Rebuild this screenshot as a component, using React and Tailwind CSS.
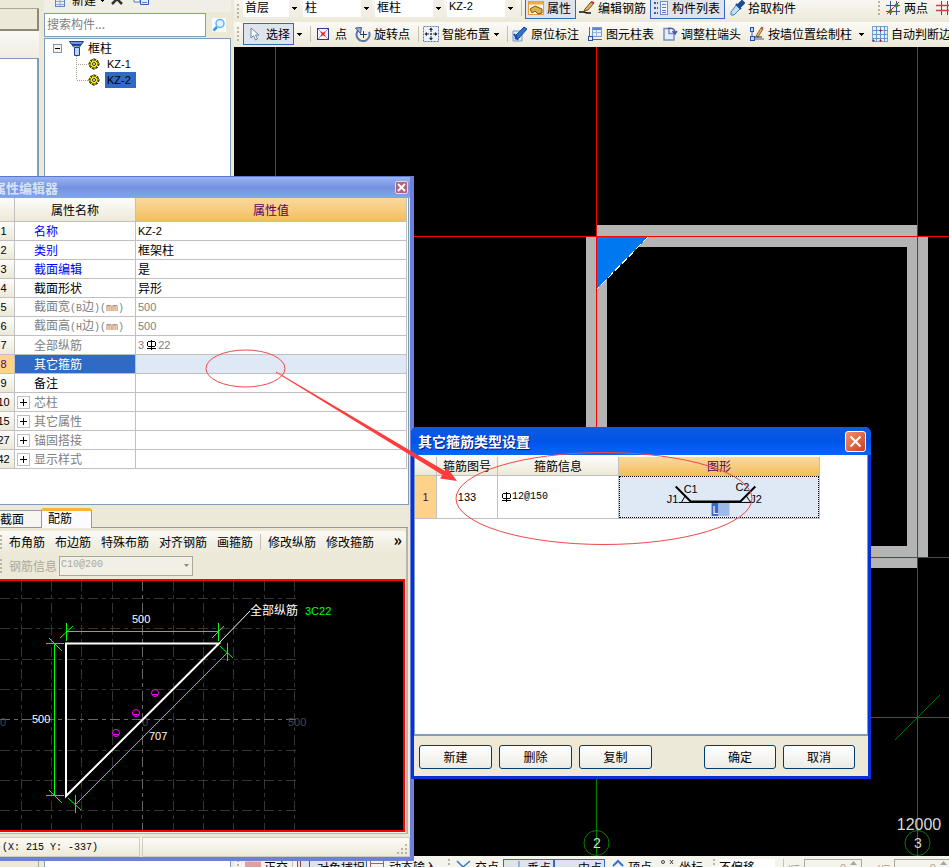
import React from "react";

const MONO = "font-['Liberation_Mono','Noto_Sans_CJK_SC',monospace] text-[10px]";
const NUM = "font-['Liberation_Sans','Noto_Sans_CJK_SC',sans-serif] text-[11px]";

function Grip() {
  return (
    <span className="mx-[3px] flex w-[3px] shrink-0 flex-col gap-[2px] self-center">
      {[0, 1, 2, 3].map((i) => (
        <i key={i} className="h-[2px] w-[2px] bg-[#b9b5a3]" />
      ))}
    </span>
  );
}

function Sep() {
  return <span className="h-4 w-px shrink-0 self-center bg-[#c5c2b4]" />;
}

function Caret() {
  return (
    <svg className="h-[3px] w-[5px] shrink-0" viewBox="0 0 5 3" shapeRendering="crispEdges">
      <path d="M0 0h5L2.500 3z" fill="#000" />
    </svg>
  );
}

const icons = {
  cursor: <path d="M5 2v10l2.500-2.500 2 4.500 2-1-2-4h3.500z" fill="#f8fbff" stroke="#6c87a8" />,
  point: (
    <>
      <rect x="1.500" y="2.500" width="11" height="11" fill="#f5f5ff" stroke="#2c3c8c" />
      <path d="M2 3l10 10M12 3L2 13" stroke="#8a9bd0" />
      <path d="M5 6l4 4M9 6l-4 4" stroke="#e02020" strokeWidth="1.500" />
    </>
  ),
  rotate: (
    <>
      <path d="M4 3.500A6.500 6.500 0 1 0 14 6" fill="none" stroke="#5a78a8" strokeWidth="2" />
      <path d="M.5 2l6-.5-1 6z" fill="#9db8dc" stroke="#36558c" />
      <path d="M8.500 5v7M5 8.500h7" stroke="#1c3c74" />
    </>
  ),
  smart: (
    <>
      <rect x=".5" y=".5" width="15" height="15" fill="#eef3fb" stroke="#5c789c" strokeDasharray="2 1" />
      <path d="M8 3v3M8 10v3M3 8h3M10 8h3" stroke="#18243c" />
      <path d="M8 1.500l2 2.500H6zM8 14.500l2-2.500H6zM1.500 8L4 6v4zM14.500 8L12 6v4z" fill="#18243c" />
      <circle cx="8" cy="8" r="1" fill="#18243c" />
    </>
  ),
  note: (
    <>
      <path d="M1 5h9v10H1z" fill="#dce9fa" stroke="#6d9ad8" />
      <path d="M4 9l8-8 3 2-8 9-4 1z" fill="#2f72c8" stroke="#174c98" />
      <path d="M2 8l4 6" stroke="#174c98" strokeWidth="2" />
    </>
  ),
  table: (
    <>
      <rect x="5.500" y="1.500" width="9" height="9" fill="#e7effb" stroke="#7a9ad0" />
      <path d="M6 3h8" stroke="#5b84cc" strokeWidth="2" />
      <path d="M6 6.500h8M9.500 4v6" stroke="#9cb6df" />
      <path d="M2.500 1v11M3 13.500h12" stroke="#4d6aa8" />
      <rect x="1.500" y="10.500" width="4" height="4" fill="#e3eeff" stroke="#274fae" />
    </>
  ),
  adjust: (
    <>
      <path d="M2 2.500h5v5h5v6.500H2z" fill="#e4edfb" stroke="#7791c4" strokeWidth="1.500" />
      <path d="M6 2.500c4-.5 7 0 7 4M10.500 5l2.500 3 2-3" fill="none" stroke="#4d55ac" strokeWidth="1.500" />
    </>
  ),
  wall: (
    <>
      <path d="M3 2v11h12" fill="none" stroke="#3d5fa8" />
      <rect x="1.500" y="1.500" width="3" height="4" fill="#bcd8ff" stroke="#274fae" />
      <rect x="1.500" y="10.500" width="4" height="4" fill="#bcd8ff" stroke="#274fae" />
      <path d="M7 10l5-8 2 1-5 8z" fill="#e4b668" stroke="#93662d" />
      <path d="M6 11h7" stroke="#222" />
      <path d="M12 1.500l2 1" stroke="#d04545" strokeWidth="2" />
    </>
  ),
  auto: (
    <>
      <rect x=".5" y=".5" width="15" height="15" fill="#e6f2ff" stroke="#78a5da" />
      <path d="M4.500 0v16M8.500 0v16M12.500 0v16M0 4.500h16M0 8.500h16M0 12.500h16" stroke="#5f96d8" />
      <path d="M8 4h1v1H8zM1 14h1v1H1zM8 14h1v1H8z" fill="#d00000" stroke="#d00000" />
    </>
  ),
  prop: (
    <>
      <rect x=".5" y="1.500" width="15" height="13" fill="#fff8e8" stroke="#e89a3c" />
      <path d="M1 3h14" stroke="#f0a848" strokeWidth="3" />
      <path d="M2 9l5-3 7 3v4l-4 1-3-3-3 2z" fill="#d9b34c" stroke="#6b5a2c" />
    </>
  ),
  pencil: (
    <>
      <path d="M6 9l6-7 3 1-6 7-4 1z" fill="#e5b25c" stroke="#7b4f27" />
      <path d="M12 2l3 1" stroke="#c83030" strokeWidth="2" />
      <path d="M0 12h5l3 1h4" stroke="#111" fill="none" strokeWidth="1.500" />
    </>
  ),
  list: (
    <>
      <path d="M1 3h4M1 8h4M1 13h4" stroke="#365caa" strokeWidth="2" strokeDasharray="2 1" />
      <rect x="7.500" y="1.500" width="7" height="13" fill="#f4f8ff" stroke="#6a8fcb" />
      <path d="M9 4.500h4M9 7.500h4M9 10.500h4M9 12.500h4" stroke="#5f7fb4" />
    </>
  ),
  dropper: (
    <>
      <path d="M8 4l4 4-7 7-3 0 0-3z" fill="#bfe1fb" stroke="#3c82c4" />
      <path d="M7 4l5 5M9 5l4-4 2 2-4 4z" fill="#1c4a94" stroke="#1c4a94" strokeWidth="2" />
    </>
  ),
  twoPoint: (
    <>
      <path d="M5.500 1v14M11.500 1v14M1 5.500h14M1 11.500h14" stroke="#3d4f98" />
      <path d="M2 14L14 2" stroke="#e02020" />
      <circle cx="5.500" cy="11.500" r="2" fill="#3c8c28" />
      <circle cx="11.500" cy="5.500" r="2" fill="#3c8c28" />
    </>
  ),
  parallel: (
    <>
      <path d="M5.500 1v14M11.500 1v14" stroke="#3d4f98" />
      <path d="M0 5.500h16M0 10.500h16" stroke="#c84050" strokeWidth="1.500" />
    </>
  ),
  sheet: (
    <>
      <rect x="2.500" y="1.500" width="9" height="13" fill="#e6effb" stroke="#5d84bf" />
      <path d="M3 9.500h8M3 12.500h8M7 7v7" stroke="#89a9d8" />
    </>
  ),
  del: <path d="M3 2l10 10M13 2L3 12" fill="none" stroke="#303030" strokeWidth="2.500" />,
  copy: (
    <>
      <path d="M1 5h6v5H1z" fill="#fff" stroke="#4774c4" />
      <path d="M7.500 2.500h8v10h-8z" fill="#e0ebfc" stroke="#2f5cb4" />
      <path d="M9 7.500h5M9 10.500h5" stroke="#5d84c4" />
    </>
  ),
  redBar: <path d="M5 0v5M0 3h16v6H0z" fill="#dfa0a0" stroke="#dfa0a0" />,
  snap: <path d="M2.500 0v9M11.500 0v9" stroke="#8a4444" fill="none" />,
  dyn: <path d="M0 4.500h14M.5 0v8M13.500 0v8" stroke="#a86060" fill="none" />,
  cross: <path d="M1 2l6 6 7-6" stroke="#3474d4" fill="none" strokeWidth="1.500" />,
  perp: <path d="M11 1v9" stroke="#8fb1e6" strokeWidth="2" />,
  none: null,
  apex: <path d="M4 7l5-5 5 5" stroke="#3474d4" fill="none" strokeWidth="2" />,
  coord: (
    <>
      <circle cx="3" cy="3" r="1.500" fill="none" stroke="#444" />
      <path d="M10 1l3 4M13 1l-3 4" stroke="#444" />
    </>
  ),
};

function Icon({ name }) {
  return (
    <svg className="h-4 w-4 shrink-0" viewBox="0 0 16 16">
      {icons[name]}
    </svg>
  );
}

function Tool({ icon, children, label, className = "" }) {
  return (
    <button type="button" aria-label={label} className={`flex shrink-0 items-center gap-[3px] whitespace-nowrap leading-4 ${className}`}>
      <Icon name={icon} />
      {children}
    </button>
  );
}

const ACTIVE = "border border-[#316ac5] bg-[#dfe4ec]";

function Combo({ label, value, width, latin }) {
  return (
    <span className={`relative mr-[3px] flex h-[17px] shrink-0 bg-white ${width}`}>
      <select aria-label={label} className={`h-full w-full appearance-none bg-white pb-1 pl-0.5 leading-[13px] outline-none ${latin ? NUM : ""}`}>
        <option>{value}</option>
      </select>
      <span className="pointer-events-none absolute inset-y-0 right-0 flex w-[11px] items-center justify-center bg-[#f1efe5]">
        <Caret />
      </span>
    </span>
  );
}

function TopBars() {
  return (
    <>
      <div className="flex h-[22px] shrink-0 items-start overflow-hidden bg-linear-to-b from-[#f8f7f2] to-[#ece9d8]">
        <Grip />
        <Combo label="楼层" value="首层" width="w-[57px]" />
        <Combo label="构件大类" value="柱" width="w-[69px]" />
        <Combo label="构件类型" value="框柱" width="w-[69px]" />
        <Combo label="构件" value="KZ-2" width="w-[69px]" latin />
        <span className="ml-0.5 flex h-4"><Sep /></span>
        <Tool icon="prop" className={`ml-[3px] h-[19px] w-[51px] border-t-0 px-[2px] pb-0.5 ${ACTIVE}`}>属性</Tool>
        <Tool icon="pencil" className="ml-[3px] h-4">编辑钢筋</Tool>
        <Tool icon="list" className={`ml-1 h-[19px] w-[75px] border-t-0 px-[2px] pb-0.5 ${ACTIVE}`}>构件列表</Tool>
        <Tool icon="dropper" className="ml-1 h-4">拾取构件</Tool>
        <span className="ml-[79px] flex h-4"><Grip /></span>
        <Tool icon="twoPoint" className="ml-px h-4">两点</Tool>
        <Tool icon="parallel" label="平行" className="ml-2 h-4" />
      </div>
      <div className="flex h-[25px] shrink-0 items-center overflow-hidden bg-linear-to-b from-[#fbfaf6] to-[#ece9d8] pb-px">
        <Grip />
        <Tool icon="cursor" className={`mr-[3px] h-[22px] w-[51px] px-0.5 ${ACTIVE}`}>
          <span className="ml-px">选择</span>
        </Tool>
        <Caret />
        <span className="ml-2 mr-[5px] flex"><Sep /></span>
        <Tool icon="point">点</Tool>
        <Tool icon="rotate" className="ml-2">旋转点</Tool>
        <span className="ml-2 mr-1 flex"><Sep /></span>
        <Tool icon="smart" className="mr-1">智能布置</Tool>
        <Caret />
        <span className="ml-2 mr-1 flex"><Sep /></span>
        <Tool icon="note">原位标注</Tool>
        <Tool icon="table" className="ml-2">图元柱表</Tool>
        <Tool icon="adjust" className="ml-2">调整柱端头</Tool>
        <Tool icon="wall" className="ml-2 mr-[7px]">按墙位置绘制柱</Tool>
        <Caret />
        <Tool icon="auto" className="ml-2">自动判断边角柱</Tool>
      </div>
    </>
  );
}

function Plan() {
  return (
    <div className="min-h-0 flex-1 overflow-hidden bg-black">
      <svg className="h-full w-full" role="img" aria-label="平面图">
        <g transform="translate(-234 -47)" shapeRendering="crispEdges">
          <g fill="#b4b4b4">
            <rect x="597" y="225" width="320" height="22" />
            <rect x="586" y="237" width="21" height="320" />
            <rect x="907" y="237" width="21" height="320" />
            <rect x="597" y="546" width="320" height="22" />
          </g>
          <path d="M597 237h51l-51 52z" fill="#0078f0" />
          <path d="M648 237l-51 52" stroke="#fff" strokeDasharray="7 3" />
          <path d="M275.500 47v810M596.500 47v510M917.500 47v510M234 236.500h4000M234 557.500h4000" stroke="#ff0000" />
          <path d="M596.500 558v299M917.500 558v299M234 717.500h4000M895 740l45-45" stroke="#008000" fill="none" />
          <g fill="none" stroke="#008000" shapeRendering="auto">
            <circle cx="596.500" cy="843" r="12.500" />
            <circle cx="917.500" cy="843" r="12.500" />
          </g>
        </g>
        <g transform="translate(-234 -47)" fill="#d8d8d8" className="font-['Liberation_Sans',sans-serif]" textAnchor="middle">
          <text x="597" y="848" fontSize="14">2</text>
          <text x="918" y="848" fontSize="14">3</text>
          <text x="919" y="830" fontSize="16">12000</text>
        </g>
      </svg>
    </div>
  );
}

function Spin({ label }) {
  return (
    <span className="flex h-4 w-[58px] shrink-0 items-start border border-[#aca899] text-[#aca899]">
      <input aria-label={label} defaultValue="0" className={`min-w-0 flex-1 bg-transparent pr-1 text-right leading-4 ${NUM}`} />
      <svg className="mt-px mr-1 h-[5px] w-[7px]" viewBox="0 0 7 5"><path d="M0 4l3.500-4L7 4z" fill="#aca899" /></svg>
    </span>
  );
}

function BottomBar() {
  return (
    <div className="flex h-[11px] shrink-0 items-start overflow-hidden bg-[#f5f4ec] pt-[3px]">
      <Grip />
      <Tool icon="redBar" className="ml-0.5">正交</Tool>
      <span className="ml-1 mr-1 flex"><Sep /></span>
      <Tool icon="snap" className={`w-[70px] ${ACTIVE}`}>对象捕捉</Tool>
      <Tool icon="dyn" className="ml-[3px]">动态输入</Tool>
      <span className="ml-2 flex"><Grip /></span>
      <Tool icon="cross" className="ml-0.5">交点</Tool>
      <Tool icon="perp" className={`ml-1 w-[51px] pl-1 ${ACTIVE}`}>垂点</Tool>
      <Tool icon="none" className={`w-[51px] pl-1 ${ACTIVE}`}>中点</Tool>
      <Tool icon="apex" className="ml-1">顶点</Tool>
      <Tool icon="coord" className="ml-2">坐标</Tool>
      <span className="ml-[7px] flex"><Grip /></span>
      <select aria-label="偏移方式" className="w-[56px] shrink-0 appearance-none bg-white leading-4">
        <option>不偏移</option>
      </select>
      <span className="ml-2 mr-1 flex"><Sep /></span>
      <span className={`mr-1 text-[#aca899] ${NUM}`}>x=</span>
      <Spin label="X 偏移" />
      <span className={`ml-4 mr-1 text-[#aca899] ${NUM}`}>y=</span>
      <Spin label="Y 偏移" />
    </div>
  );
}

function Gear() {
  return (
    <svg className="h-3 w-3 shrink-0" viewBox="0 0 12 12">
      <circle cx="6" cy="6" r="4.500" fill="#f4ee00" stroke="#3a3a00" strokeWidth="1.500" strokeDasharray="2 1.500" />
      <path d="M6 0v3M6 9v3M0 6h3M9 6h3M2 2l2 2M10 2L8 4M2 10l2-2M10 10L8 8" stroke="#4a4700" />
      <circle cx="6" cy="6" r="1.500" fill="#fff" stroke="#333" />
    </svg>
  );
}

function TreeLeaf({ name, selected }) {
  return (
    <li className="flex h-4 items-center">
      <svg className="h-4 w-3 shrink-0" viewBox="0 0 12 16" shapeRendering="crispEdges">
        <path d={selected ? "M.5 0v8H12" : "M.5 0v16M0 8.500h12"} fill="none" stroke="#a8a38e" strokeDasharray="1 1" />
      </svg>
      <Gear />
      <span className={`ml-[5px] h-4 px-0.5 leading-4 ${NUM} ${selected ? "w-[31px] bg-[#316ac5]" : ""}`}>{name}</span>
    </li>
  );
}

function LeftPanels() {
  return (
    <>
      <div className="flex w-[39px] shrink-0 flex-col">
        <div className="h-[9px] shrink-0 border-b border-[#aca899]" />
        <div className="h-[22px] shrink-0 border-b-2 border-r-2 border-[#8c8978] bg-[#ece9d8]" />
        <div className="h-[27px] shrink-0 bg-linear-to-b from-[#faf9f5] to-[#efede0]" />
        <div className="min-h-0 flex-1 border-t border-r-2 border-[#7f9db9] bg-white" />
        <div className="h-[6px] shrink-0 border-r border-[#aca899]" />
      </div>
      <div className="ml-[5px] flex w-[187px] shrink-0 flex-col">
        <div className="h-3 shrink-0 overflow-hidden bg-[#f1efe5]">
          <div className="-mt-2 flex h-4 items-center pl-[9px]">
            <Tool icon="sheet" className="mr-1">新建</Tool>
            <Caret />
            <Tool icon="del" label="删除" className="ml-1" />
            <Tool icon="copy" label="复制" className="ml-2" />
          </div>
        </div>
        <div className="flex h-[26px] shrink-0 items-center">
          <input aria-label="搜索构件" placeholder="搜索构件..." className="h-6 min-w-0 flex-1 border border-[#7f9db9] bg-white pb-1 pl-0.5 placeholder:text-[#808080]" />
          <button type="button" aria-label="搜索" className="flex w-[25px] justify-center">
            <svg className="h-[14px] w-[14px]" viewBox="0 0 14 14">
              <rect width="14" height="14" fill="#f5fbff" />
              <path d="M1.500 12.500L5 9" stroke="#3a94e6" strokeWidth="2.500" />
              <circle cx="8" cy="5.500" r="4" fill="#dff2ff" stroke="#5cb4f0" strokeWidth="1.500" />
            </svg>
          </button>
        </div>
        <div className="min-h-0 flex-1 border border-b-0 border-[#7f9db9] bg-white pt-px pl-2">
          <div className="flex h-4 items-center">
            <svg className="h-[9px] w-[9px]" viewBox="0 0 9 9" shapeRendering="crispEdges">
              <rect x=".5" y=".5" width="8" height="8" fill="#f5f3ea" stroke="#7b98b4" />
              <path d="M2 4.500h5" stroke="#000" />
            </svg>
            <svg className="ml-[7px] mr-1 h-[15px] w-[15px]" viewBox="0 0 15 15">
              <path d="M.5.500h14l-2 3h-10z" fill="#6f93dc" stroke="#1c3c8c" />
              <path d="M3 4.500h9L10 6H5z" fill="#fff" stroke="#2e519f" />
              <path d="M5.500 6.500h5v8h-5z" fill="#bcd6fa" stroke="#1c3ca4" />
            </svg>
            框柱
          </div>
          <ul className="pl-[23px]">
            <TreeLeaf name="KZ-1" />
            <TreeLeaf name="KZ-2" selected />
          </ul>
        </div>
      </div>
      <div className="w-[3px] shrink-0" />
    </>
  );
}

function Rebar() {
  return (
    <svg className="h-[10px] w-[10px] shrink-0 text-black" viewBox="0 0 10 10" shapeRendering="crispEdges">
      <path d="M5 0h1v10H5zM1 8h9v1H1zM2 1h7v1H2zM1 2h1v4H1zM9 2h1v4H9zM2 6h7v1H2z" fill="currentColor" />
    </svg>
  );
}

const M = ({ children }) => <span className={MONO}>{children}</span>;

const rows = [
  { no: "1", name: "名称", value: <span className={NUM}>KZ-2</span>, tone: "text-[#0000ff]" },
  { no: "2", name: "类别", value: "框架柱", tone: "text-[#0000ff]" },
  { no: "3", name: "截面编辑", value: "是", tone: "text-[#0000ff]" },
  { no: "4", name: "截面形状", value: "异形", tone: "text-black" },
  { no: "5", name: <>截面宽<M>(B</M>边<M>)(mm)</M></>, value: <span className={NUM}>500</span>, tone: "text-[#808080]", dim: true },
  { no: "6", name: <>截面高<M>(H</M>边<M>)(mm)</M></>, value: <span className={NUM}>500</span>, tone: "text-[#808080]", dim: true },
  { no: "7", name: "全部纵筋", value: <span className={`flex items-center gap-0.5 ${NUM}`}>3<Rebar />22</span>, tone: "text-[#808080]", dim: true },
  { no: "8", name: "其它箍筋", value: "", tone: "text-white", selected: true },
  { no: "9", name: "备注", value: "", tone: "text-black" },
  { no: "10", name: "芯柱", value: "", tone: "text-[#808080]", group: true },
  { no: "15", name: "其它属性", value: "", tone: "text-[#808080]", group: true },
  { no: "27", name: "锚固搭接", value: "", tone: "text-[#808080]", group: true },
  { no: "42", name: "显示样式", value: "", tone: "text-[#808080]", group: true },
];

const CELL = "border-b border-r border-[#c0c0c0] p-0";
const HEAD = "bg-linear-to-b from-[#fdfcf9] to-[#ece9d8] font-normal";
const HEAD_ON = "bg-linear-to-b from-[#fad99e] to-[#f3bf5c] font-normal text-[#5a0060]";

function PropertyTable() {
  return (
    <table className="w-[414px] table-fixed border-separate border-spacing-0">
      <colgroup>
        <col className="w-[22px]" />
        <col className="w-[121px]" />
        <col />
      </colgroup>
      <thead>
        <tr className="h-6">
          <th className={`${CELL} ${HEAD}`} aria-label="序号" />
          <th className={`${CELL} ${HEAD}`}>属性名称</th>
          <th className={`${CELL} ${HEAD_ON}`}>属性值</th>
        </tr>
      </thead>
      <tbody>
        {rows.map((r) => (
          <tr key={r.no} className="h-[19px]">
            <td className={`${CELL} text-center leading-4 ${NUM} ${r.selected ? "bg-[#ffd28c] text-[#5a0060]" : HEAD}`}>{r.no}</td>
            <td className={`${CELL} ${r.tone} ${r.selected ? "bg-[#316ac5]" : ""}`}>
              <div className="flex h-[18px] items-center pl-[2px]">
                <span className="flex w-[17px] shrink-0">
                  {r.group && (
                    <button type="button" aria-label="展开" className="h-[13px] w-[13px] border border-[#c0c0c0]">
                      <svg className="h-full w-full" viewBox="0 0 11 11" shapeRendering="crispEdges">
                        <path d="M2 5.500h7M5.500 2v7" stroke="#000" />
                      </svg>
                    </button>
                  )}
                </span>
                <span className="whitespace-nowrap leading-4">{r.name}</span>
              </div>
            </td>
            <td className={`${CELL} ${r.dim ? "text-[#808080]" : ""} ${r.selected ? "bg-[#dfe9f6]" : ""}`}>
              <div className="flex h-[18px] items-center pl-0.5">{r.value}</div>
            </td>
          </tr>
        ))}
      </tbody>
    </table>
  );
}

function Section() {
  return (
    <svg className="h-full w-full" role="img" aria-label="截面配筋图">
      <g transform="translate(5 -581)">
        <g stroke="#343434" strokeDasharray="10 4 4 4" shapeRendering="crispEdges">
          <path d="M21.500 581v250M51.500 581v250M81.500 581v250M112.500 581v250M173.500 581v250M203.500 581v250M233.500 581v250M264.500 581v250M294.500 581v250" />
          <path d="M0 598.500h299M0 628.500h299M0 659.500h299M0 689.500h299M0 750.500h299M0 780.500h299M0 810.500h299" />
          <path d="M142.500 581v250M0 719.500h299" stroke="#686868" />
        </g>
        <g fill="#484848" className="font-['Liberation_Sans',sans-serif]" fontSize="11">
          <text x="0" y="726">0</text>
          <text x="142" y="726">0</text>
          <text x="288" y="726">500</text>
        </g>
        <g stroke="#00ff00" fill="none">
          <path d="M66 631.500h153M54.500 643v153M46 643.500h18M46 795.500h18M66.500 623v18M218.500 623v18M227.500 643v18M75.500 795v18" shapeRendering="crispEdges" />
          <path d="M60 638l13-12M212 638l12-12M49 638l13 13M49 790l13 13M75 805L228 652M220 646l13 12M68 798l13 12" />
        </g>
        <path d="M66 643.500H219L66 796z" fill="none" stroke="#fff" strokeWidth="2" />
        <path d="M219 643l31-32" stroke="#fff" />
        {[[155, 693], [136, 713], [116, 733]].map(([x, y]) => (
          <g key={x} stroke="#ff00ff" fill="none">
            <circle cx={x} cy={y} r="3.500" />
            <path d={`M${x - 3} ${y + 1.5}h6`} />
          </g>
        ))}
        <g fill="#fff" className="font-['Liberation_Sans','Noto_Sans_CJK_SC',sans-serif]" fontSize="11">
          <text x="132" y="623">500</text>
          <text x="32" y="723">500</text>
          <text x="149" y="740">707</text>
          <text x="250" y="615" fontSize="12">全部纵筋</text>
          <text x="305" y="615" fill="#00ff00">3C22</text>
        </g>
      </g>
    </svg>
  );
}

function PropertyWindow() {
  return (
    <section className="absolute top-44 -left-[7px] flex h-[685px] w-[421px] flex-col border-r-4 border-b-4 border-[#6b7fdb] bg-[#ece9d8]">
      <header className="flex h-[22px] shrink-0 items-center justify-between border-t border-[#5a78d0] bg-linear-to-b from-[#9ab4f0] via-[#7592df] to-[#82a6eb]">
        <h2 className="text-[13px] leading-4 font-bold text-[#d8e3fa]">属性编辑器</h2>
        <button type="button" aria-label="关闭" className="mr-0.5 flex h-[13px] w-[13px] items-center justify-center rounded-xs border border-[#e5d6e8] bg-[#b3627c]">
          <svg className="h-[9px] w-[9px]" viewBox="0 0 9 9"><path d="M1 1l7 7M8 1L1 8" stroke="#fff" strokeWidth="2" /></svg>
        </button>
      </header>
      <div className="mr-px h-[307px] shrink-0 border-r border-b border-[#7f9db9] bg-white">
        <PropertyTable />
      </div>
      <div role="tablist" className="mr-0.5 flex h-[23px] shrink-0 items-end border-b border-[#919b9c]">
        <button type="button" role="tab" aria-selected="false" className="h-[17px] w-12 border-t border-[#919b9c] bg-[#f7f6f0] pl-[7px] text-left leading-4">截面</button>
        <button type="button" role="tab" aria-selected="true" className="-mb-px flex h-5 w-[51px] rounded-t-[3px] border-x border-t-[3px] border-x-[#919b9c] border-t-[#f9b233] bg-[#fcfcfe] pl-1.5 leading-[14px]">配筋</button>
      </div>
      <div className="mr-0.5 flex min-h-0 flex-1 flex-col border-r-2 border-b border-[#b8b6a8] pt-[3px]">
        <div className="flex h-[22px] shrink-0 items-center gap-2.5 rounded-r bg-linear-to-b from-[#fbfaf6] to-[#ece9d8] pl-1 whitespace-nowrap">
          <span className="-mr-[7px] flex"><Grip /></span>
          {["布角筋", "布边筋", "特殊布筋", "对齐钢筋", "画箍筋"].map((t) => (
            <button type="button" key={t}>{t}</button>
          ))}
          <span className="-mx-[3px] flex"><Sep /></span>
          <button type="button">修改纵筋</button>
          <button type="button">修改箍筋</button>
          <button type="button" aria-label="更多" className="mr-1 mb-1.5 ml-auto text-[16px] leading-3 font-bold">»</button>
        </div>
        <div className="flex h-[26px] shrink-0 items-center pl-1 text-[#aca899]">
          <Grip />
          <label htmlFor="rebar-info" className="ml-[3px]">钢筋信息</label>
          <span className="relative ml-0.5 flex h-5 w-[134px]">
            <select id="rebar-info" disabled className={`w-full appearance-none border border-[#aca899] bg-[#f2f0e6] pb-0.5 pl-px text-[#aca899] opacity-100 ${MONO}`}>
              <option>C10@200</option>
            </select>
            <svg className="pointer-events-none absolute top-2 right-1 h-[3px] w-[5px]" viewBox="0 0 5 3"><path d="M0 0h5L2.500 3z" fill="#8c8978" /></svg>
          </span>
        </div>
        <div className="mr-px min-h-0 flex-1 border-2 border-[#ff0000] bg-black">
          <Section />
        </div>
        <div className="h-px shrink-0 bg-[#f7f6f0]" />
      </div>
      <footer className="mt-[3px] flex h-5 shrink-0 bg-linear-to-b from-[#fdfcf8] to-[#ece9d8]">
        <div className={`w-[147px] border border-[#d0cdbd] pl-2 leading-5 whitespace-nowrap ${MONO}`}>(X: 215 Y: -337)</div>
        <div className="ml-0.5 flex flex-1 items-end justify-end border border-[#d0cdbd]">
          <svg className="h-3 w-3" viewBox="0 0 12 12"><path d="M8 0h2v2H8zM4 4h2v2H4zM8 4h2v2H8zM0 8h2v2H0zM4 8h2v2H4zM8 8h2v2H8z" fill="#b8b4a2" /></svg>
        </div>
      </footer>
    </section>
  );
}

function StirrupShape() {
  return (
    <svg className="block h-10 w-full" viewBox="0 0 199 40" role="img" aria-label="箍筋图形">
      <rect x="92" y="26" width="7" height="13" fill="#316ac5" />
      <rect x="99" y="26" width="11" height="13" fill="#9db8ea" />
      <path d="M56 9.500L71 24.500H121L136 9.500" fill="none" stroke="#000" strokeWidth="2" />
      <path d="M59 25.500h73M62 25l4-7M127 19l4 6" stroke="#000" fill="none" />
      <g className="font-['Liberation_Sans',sans-serif]" fontSize="11">
        <text x="64" y="16">C1</text>
        <text x="116" y="14">C2</text>
        <text x="47" y="26">J1</text>
        <text x="131" y="26">J2</text>
        <text x="93" y="37" fill="#fff">L</text>
      </g>
    </svg>
  );
}

const XP_BUTTON = "h-6 rounded-[3px] border border-[#003c74] bg-linear-to-b from-white to-[#ecebe5] leading-5";

function StirrupDialog() {
  return (
    <section role="dialog" aria-label="其它箍筋类型设置" className="absolute top-[427px] left-[411px] flex h-[352px] w-[460px] flex-col rounded-t-md border-x-[3px] border-b-[3px] border-[#0831d9] bg-[#ece9d8]">
      <header className="-mx-[3px] flex h-[28px] shrink-0 items-center justify-between rounded-t-md bg-linear-to-b from-[#0f5be0] via-[#0054e6] to-[#0566ff] pr-[5px] pl-[7px]">
        <h2 className="text-[14px] leading-5 font-bold text-white [text-shadow:1px_1px_#0a1883]">其它箍筋类型设置</h2>
        <button type="button" aria-label="关闭" className="flex h-[21px] w-[21px] items-center justify-center rounded-[3px] border border-white bg-linear-to-br from-[#f0916f] to-[#cf3a14]">
          <svg className="h-[13px] w-[13px]" viewBox="0 0 13 13"><path d="M1.500 1.500l10 10M11.500 1.500l-10 10" stroke="#fff" strokeWidth="2" /></svg>
        </button>
      </header>
      <div className="min-h-0 flex-1 border border-t-0 border-[#7f9db9] bg-white pt-0.5">
        <table className="w-[405px] table-fixed border-separate border-spacing-0">
          <colgroup>
            <col className="w-[22px]" />
            <col className="w-[61px]" />
            <col className="w-[121px]" />
            <col />
          </colgroup>
          <thead>
            <tr className="h-[19px]">
              <th className={`${CELL} ${HEAD}`} aria-label="序号" />
              <th className={`${CELL} ${HEAD} leading-4`}>箍筋图号</th>
              <th className={`${CELL} ${HEAD} leading-4`}>箍筋信息</th>
              <th className={`${CELL} ${HEAD_ON} leading-4`}>图形</th>
            </tr>
          </thead>
          <tbody>
            <tr className="h-[42px]">
              <td className={`${CELL} bg-[#ffd28c] text-center text-[#5a0060] ${NUM}`}>1</td>
              <td className={`${CELL} text-center ${NUM}`}>133</td>
              <td className={CELL}>
                <span className={`flex items-center gap-px pl-[3px] ${MONO}`}><Rebar />12@150</span>
              </td>
              <td className={`${CELL} bg-[#dfe9f6]`}>
                <div className="border border-dotted border-black"><StirrupShape /></div>
              </td>
            </tr>
          </tbody>
        </table>
      </div>
      <footer className="flex h-[41px] shrink-0 items-center gap-[7px] border-t border-[#7f9db9] px-[5px] pt-0.5">
        <button type="button" className={`w-[73px] ${XP_BUTTON}`}>新建</button>
        <button type="button" className={`w-[73px] ${XP_BUTTON}`}>删除</button>
        <button type="button" className={`w-[73px] ${XP_BUTTON}`}>复制</button>
        <button type="button" className={`ml-auto w-[72px] ${XP_BUTTON}`}>确定</button>
        <button type="button" className={`mr-2 w-[72px] ${XP_BUTTON}`}>取消</button>
      </footer>
    </section>
  );
}

function Markup() {
  return (
    <svg className="pointer-events-none absolute inset-0 h-full w-full" aria-hidden="true">
      <g fill="none" stroke="#f04848">
        <ellipse cx="245.500" cy="368.500" rx="39.500" ry="18.500" />
        <ellipse cx="604" cy="498.500" rx="148" ry="46" />
      </g>
      <path d="M276 371.500L445 471L447 467.500L457 481L440 478.500L442.500 475L276 372.500z" fill="#ff3b3b" />
    </svg>
  );
}

export default function App() {
  return (
    <main className="relative flex h-screen w-full overflow-hidden bg-[#ece9d8] font-['Noto_Sans_CJK_SC',sans-serif] text-[12px] leading-4 text-black">
      <LeftPanels />
      <div className="flex min-w-0 flex-1 flex-col">
        <TopBars />
        <Plan />
        <BottomBar />
      </div>
      <PropertyWindow />
      <StirrupDialog />
      <Markup />
    </main>
  );
}
